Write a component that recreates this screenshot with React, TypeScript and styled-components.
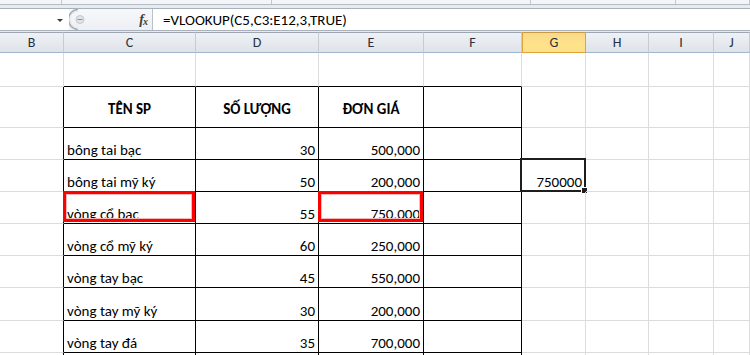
import React from "react";
import styled, { createGlobalStyle, css } from "styled-components";

const GlobalStyle = createGlobalStyle`
  html, body {
    margin: 0;
    padding: 0;
    background: #ffffff;
    overflow: hidden;
  }
`;

const FONT = `"Carlito", "Lato", "Noto Sans", sans-serif`;

const COLS = [64, 132, 123, 105, 98, 64, 63, 65];
const COL_NAMES = ["B", "C", "D", "E", "F", "G", "H", "I", "J"];
const ROW_HEIGHTS = [34, 41, 32, 32, 32, 32, 32, 33, 32, 20];

const Window = styled.div`
  width: 750px;
  height: 355px;
  overflow: hidden;
  background: #ffffff;
  font-family: ${FONT};
`;

const RibbonEdge = styled.div`
  height: 5px;
  display: flex;
  background: #f3f5f8;
  border-bottom: 1px solid #b6bcc6;
  box-sizing: border-box;
`;

const RibbonGroup = styled.div<{ $w: number }>`
  width: ${(p) => p.$w}px;
  flex: ${(p) => (p.$w ? "none" : "1")};
  border-right: 1px solid #c2c8d0;
`;

const Band = styled.div<{ $h: number }>`
  height: ${(p) => p.$h}px;
  background: #e7ebf0;
`;

const FormulaBar = styled.div`
  height: 23px;
  display: flex;
  box-sizing: border-box;
  border-top: 1px solid #a9b1bc;
  border-bottom: 1px solid #a9b1bc;
  background: #ffffff;
`;

const NameBox = styled.div`
  width: 69px;
  display: flex;
  align-items: center;
  justify-content: flex-end;
  padding-right: 6px;
  box-sizing: border-box;
  background: #ffffff;
`;

const DropArrow = styled.span`
  width: 0;
  height: 0;
  border-left: 3px solid transparent;
  border-right: 3px solid transparent;
  border-top: 3px solid #3c3c3c;
  margin-top: 2px;
`;

const Controls = styled.div`
  width: 84px;
  display: flex;
  align-items: center;
  justify-content: space-between;
  padding-right: 5px;
  box-sizing: border-box;
  background: linear-gradient(#f7f8fa, #eceff3);
  border-right: 1px solid #b9c0c9;
`;

const FxLabel = styled.span`
  font-family: "Liberation Serif", serif;
  font-style: italic;
  font-weight: bold;
  font-size: 14px;
  color: #404040;
  letter-spacing: -1px;
  & sub {
    font-size: 10px;
    vertical-align: -1px;
  }
`;

const FormulaText = styled.div`
  flex: 1;
  padding-left: 10px;
  display: flex;
  align-items: center;
  font-size: 15px;
  color: #000000;
`;

const Sheet = styled.div`
  display: grid;
  grid-template-columns: ${COLS.map((c) => c + "px").join(" ")} 1fr;
  grid-template-rows: 21px ${ROW_HEIGHTS.map((h) => h + "px").join(" ")};
`;

const ColHeader = styled.div<{ $active?: boolean }>`
  box-sizing: border-box;
  display: flex;
  align-items: center;
  justify-content: center;
  font-size: 14px;
  color: #27313d;
  border-top: 1px solid #9ea6b1;
  border-right: 1px solid #c6ccd4;
  border-bottom: 1px solid #9eb6ce;
  background: linear-gradient(#eef1f5, #dfe3e8);
  ${(p) =>
    p.$active &&
    css`
      background: linear-gradient(#f9d98a, #ffe38a 60%, #fbe08c);
      border: 1px solid #e2a43a;
      border-top-color: #c99a45;
    `}
`;

type Edge = "grid" | "dark";

const Cell = styled.div<{
  $right: Edge;
  $bottom: Edge;
  $align: "left" | "right" | "center";
  $bold?: boolean;
}>`
  position: relative;
  box-sizing: border-box;
  display: flex;
  align-items: ${(p) => (p.$bold ? "center" : "flex-end")};
  justify-content: ${(p) =>
    p.$align === "left" ? "flex-start" : p.$align === "right" ? "flex-end" : "center"};
  padding: ${(p) => (p.$bold ? "4px 3px 0 3px" : "0 3px 0 3px")};
  font-size: 15px;
  line-height: 18px;
  white-space: nowrap;
  color: #000000;
  font-weight: ${(p) => (p.$bold ? 700 : 400)};
  border-right: 1px solid ${(p) => (p.$right === "dark" ? "#000000" : "#dadcdd")};
  border-bottom: 1px solid ${(p) => (p.$bottom === "dark" ? "#000000" : "#dadcdd")};
`;

const RedMark = styled.div`
  position: absolute;
  top: -1px;
  left: -1px;
  right: 0;
  bottom: 1px;
  border: 3px solid #ff0000;
  box-shadow: inset 0 0 0 1px #f6b9b9;
  pointer-events: none;
`;

const Selection = styled.div`
  position: absolute;
  top: -2px;
  left: -2px;
  right: -1px;
  bottom: -1px;
  border: 2px solid #1e1e1e;
  pointer-events: none;
`;

const FillHandle = styled.div`
  position: absolute;
  right: -4px;
  bottom: -4px;
  width: 5px;
  height: 5px;
  background: #1e1e1e;
  border: 1px solid #ffffff;
`;

const products = [
  { name: "bông tai bạc", qty: 30, price: "500,000" },
  { name: "bông tai mỹ ký", qty: 50, price: "200,000" },
  { name: "vòng cổ bạc", qty: 55, price: "750,000" },
  { name: "vòng cổ mỹ ký", qty: 60, price: "250,000" },
  { name: "vòng tay bạc", qty: 45, price: "550,000" },
  { name: "vòng tay mỹ ký", qty: 30, price: "200,000" },
  { name: "vòng tay đá", qty: 35, price: "700,000" },
];

type CellData = {
  text?: string;
  align?: "left" | "right" | "center";
  bold?: boolean;
  red?: boolean;
  selected?: boolean;
};

function buildRow(r: number): CellData[] {
  const row: CellData[] = COL_NAMES.map(() => ({}));
  if (r === 1) {
    row[1] = { text: "TÊN SP", align: "center", bold: true };
    row[2] = { text: "SỐ LƯỢNG", align: "center", bold: true };
    row[3] = { text: "ĐƠN GIÁ", align: "center", bold: true };
  }
  const p = products[r - 2];
  if (p) {
    row[1] = { text: p.name, align: "left", red: p.name === "vòng cổ bạc" };
    row[2] = { text: String(p.qty), align: "right" };
    row[3] = { text: p.price, align: "right", red: p.name === "vòng cổ bạc" };
  }
  if (r === 3) {
    row[5] = { text: "750000", align: "right", selected: true };
  }
  return row;
}

export default function App() {
  return (
    <Window>
      <GlobalStyle />
      <RibbonEdge>
        <RibbonGroup $w={61} />
        <RibbonGroup $w={209} />
        <RibbonGroup $w={258} />
        <RibbonGroup $w={144} />
        <RibbonGroup $w={0} />
      </RibbonEdge>
      <Band $h={3} />
      <FormulaBar>
        <NameBox>
          <DropArrow />
        </NameBox>
        <Controls>
          <svg width="18" height="21" viewBox="0 0 18 21">
            <path d="M9 0.5 A9.5 10 0 0 0 9 20.5" fill="none" stroke="#a7aeb8" strokeWidth="1.6" />
            <path d="M9 2 A8 8.5 0 0 0 9 19" fill="none" stroke="#e2e6eb" strokeWidth="1" />
            <circle cx="11" cy="10.5" r="4" fill="#dfe3e8" stroke="#c3c9d1" strokeWidth="1" />
            <line x1="8.5" y1="10.5" x2="13.5" y2="10.5" stroke="#8e969f" strokeWidth="1" />
          </svg>
          <FxLabel>
            f<sub>x</sub>
          </FxLabel>
        </Controls>
        <FormulaText>=VLOOKUP(C5,C3:E12,3,TRUE)</FormulaText>
      </FormulaBar>
      <Band $h={1} />
      <Sheet>
        {COL_NAMES.map((c) => (
          <ColHeader key={c} $active={c === "G"}>
            {c}
          </ColHeader>
        ))}
        {ROW_HEIGHTS.map((_, r) =>
          buildRow(r).map((cell, ci) => {
            const inTable = ci >= 1 && ci <= 4;
            const right: Edge = r >= 1 && ci <= 4 ? "dark" : "grid";
            const bottom: Edge = inTable && r <= ROW_HEIGHTS.length - 2 ? "dark" : "grid";
            return (
              <Cell
                key={`${r}-${ci}`}
                $right={right}
                $bottom={bottom}
                $align={cell.align ?? "left"}
                $bold={cell.bold}
              >
                {cell.text}
                {cell.red && <RedMark />}
                {cell.selected && (
                  <Selection>
                    <FillHandle />
                  </Selection>
                )}
              </Cell>
            );
          })
        )}
      </Sheet>
    </Window>
  );
}
